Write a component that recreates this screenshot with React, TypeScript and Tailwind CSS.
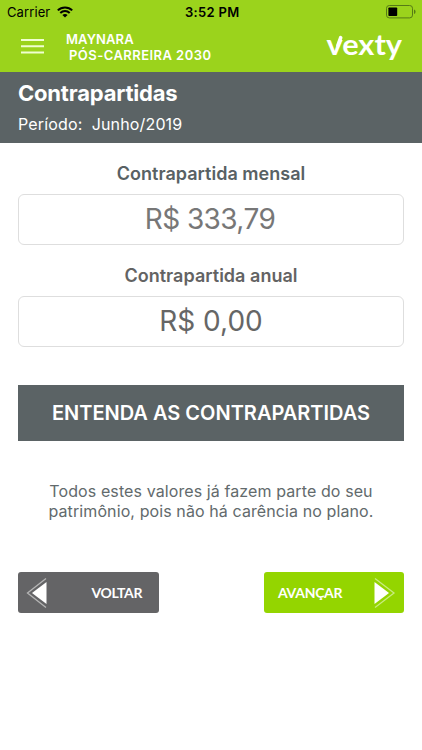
import * as React from 'react';

interface AmountFieldProps {
  label: string;
  value: string;
  labelClass: string;
  valueClass: string;
}

const StatusBar: React.FC = () => (
  <div className="relative flex h-6 items-center justify-between pl-[7px] pr-[6px] text-black">
    <div className="flex items-center gap-[7px]">
      <span className="text-[13px] leading-6 tracking-[0.1px]">Carrier</span>
      <svg width="16" height="12" viewBox="0 0 16 12" fill="none" stroke="black" strokeWidth="2">
        <path d="M0.8 4.4C4.8 0.4 11.2 0.4 15.2 4.4" />
        <path d="M3.3 7C6 4.4 10 4.4 12.7 7" />
        <path d="M8 11.6L5.4 9C6.9 7.6 9.1 7.6 10.6 9Z" fill="black" stroke="none" />
      </svg>
    </div>
    <span className="absolute left-[185px] text-[13px] leading-6 font-semibold tracking-[0.3px]">3:52 PM</span>
    <svg width="30" height="14" viewBox="0 0 30 14" fill="none">
      <rect x="0.5" y="0.5" width="26" height="12.4" rx="2.8" stroke="#567a16" />
      <rect x="2.4" y="2.4" width="8.8" height="8.6" rx="0.8" fill="black" />
      <path d="M28 4.5Q29.6 5 29.6 6.7Q29.6 8.4 28 8.9Z" fill="#567a16" />
    </svg>
  </div>
);

const Logo: React.FC = () => (
  <svg width="80" height="46" viewBox="0 -7 80 46" fill="white" className="font-[Lato,sans-serif] font-bold">
    <text x="1.5" y="24" fontSize="29" textLength="75.5" lengthAdjust="spacingAndGlyphs">vexty</text>
    <path d="M12.9 14.5L15.7 6.6" stroke="white" strokeWidth="3.6" strokeLinecap="round" />
  </svg>
);

const AmountField: React.FC<AmountFieldProps> = ({ label, value, labelClass, valueClass }) => (
  <div className="flex flex-col items-center">
    <h2 className={`text-[18px] leading-[22px] font-semibold tracking-[0.02px] ${labelClass}`}>{label}</h2>
    <div
      className={`mt-[9px] flex h-[51px] w-full items-center justify-center rounded-[6px] border border-[#dedede] pb-px text-[28px] ${valueClass}`}
    >
      {value}
    </div>
  </div>
);

export default function App() {
  return (
    <div className="h-[750px] w-[422px] overflow-hidden bg-white font-[Inter,sans-serif]">
      <header className="h-[72px] bg-[#9bd31c]">
        <StatusBar />
        <div className="flex h-12 items-start pl-[21px] pr-[17px]">
          <svg width="23" height="16" viewBox="0 0 23 16" stroke="#f0ffd0" strokeWidth="2" className="mt-[14px]">
            <path d="M0 2H23M0 8.3H23M0 14.5H23" />
          </svg>
          <div className="mt-[7px] ml-[22px] flex-1 text-[13px] leading-4 font-semibold whitespace-pre text-white">
            <p className="tracking-[0.1px]">MAYNARA</p>
            <p className="pl-[3px] tracking-[0.45px]">PÓS-CARREIRA 2030</p>
          </div>
          <Logo />
        </div>
      </header>

      <section className="h-[71px] bg-[#5b6365] px-[18px] pt-[8px] text-white">
        <h1 className="text-[22px] leading-[27px] font-bold tracking-[-0.2px]">Contrapartidas</h1>
        <p className="mt-[7px] text-[16px] leading-5 tracking-[0.15px] whitespace-pre">Período:  Junho/2019</p>
      </section>

      <main className="px-[18px] pt-[20px]">
        <AmountField
          label="Contrapartida mensal"
          value="R$ 333,79"
          labelClass="text-[#586164]"
          valueClass="text-[#777777] tracking-[-0.6px] pr-[2px]"
        />
        <div className="mt-[20px]">
          <AmountField
            label="Contrapartida anual"
            value="R$ 0,00"
            labelClass="text-[#636363]"
            valueClass="text-[#666666]"
          />
        </div>

        <button className="mt-[38px] block h-[56px] w-full bg-[#5b6365] text-[20px] font-semibold text-white">
          ENTENDA AS CONTRAPARTIDAS
        </button>

        <p className="mt-[40px] text-center text-[16px] leading-5 tracking-[0.1px] text-[#626a6c]">
          Todos estes valores já fazem parte do seu
          <br />
          patrimônio, pois não há carência no plano.
        </p>

        <div className="mt-[51px] flex justify-between font-[Lato,sans-serif] text-[14px] font-bold text-white">
          <button className="flex h-[41px] w-[141px] items-center justify-between rounded-[3px] bg-[#646466] pr-[17px] pl-[8px]">
            <svg width="22" height="32" viewBox="0 0 22 32" fill="none">
              <path d="M20 1.5L1.5 16L20 30.5" stroke="#b5b5b5" strokeWidth="1.3" />
              <path d="M20.5 5V27L6 16Z" fill="white" />
            </svg>
            <span className="tracking-[-0.4px]">VOLTAR</span>
          </button>
          <button className="flex h-[41px] w-[140px] items-center justify-between rounded-[3px] bg-[#94d500] pr-[8px] pl-[14px]">
            <span className="tracking-[-0.3px]">AVANÇAR</span>
            <svg width="22" height="32" viewBox="0 0 22 32" fill="none">
              <path d="M1 1.5L20 16L1 30.5" stroke="#c9eb80" strokeWidth="1.3" />
              <path d="M0.5 5V27L15 16Z" fill="white" />
            </svg>
          </button>
        </div>
      </main>
    </div>
  );
}
